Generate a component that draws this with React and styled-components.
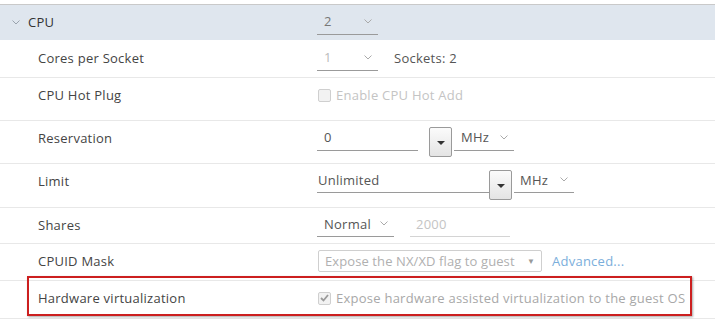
import React from "react";
import styled, { createGlobalStyle } from "styled-components";

const GlobalStyle = createGlobalStyle`
  html, body {
    margin: 0;
    padding: 0;
    background: #fff;
  }
  body {
    font-family: "Open Sans", "Noto Sans", sans-serif;
    font-size: 13px;
    letter-spacing: 0.25px;
    color: #444;
  }
`;

const Panel = styled.div`
  width: 715px;
  padding-top: 4px;
`;

const Row = styled.div`
  box-sizing: border-box;
  display: grid;
  grid-template-columns: 317px 1fr;
  align-items: center;
  height: ${(p) => p.h}px;
  padding-bottom: ${(p) => p.pb || 0}px;
  border-bottom: 1px solid #e8e8e8;
  position: relative;
`;

const HeaderRow = styled(Row)`
  background: #dfe6ee;
  border-top: 1px solid #c9c9c9;
  border-bottom: none;
`;

const HeaderLabel = styled.div`
  display: flex;
  align-items: center;
  padding-left: 12px;
  gap: 8px;
  color: #333;
`;

const Label = styled.div`
  padding-left: 38px;
  color: #444;
  white-space: nowrap;
`;

const Value = styled.div`
  display: flex;
  align-items: center;
  white-space: nowrap;
`;

const Select = styled.div`
  box-sizing: border-box;
  display: flex;
  align-items: center;
  justify-content: space-between;
  width: ${(p) => p.w}px;
  height: 25px;
  padding: 0 6px 1px ${(p) => (p.pl != null ? p.pl : 7)}px;
  border-bottom: 1px solid #9a9a9a;
  color: ${(p) => (p.disabled ? "#bbb" : "#777")};
`;

const Input = styled.div`
  box-sizing: border-box;
  display: flex;
  align-items: center;
  width: ${(p) => p.w}px;
  height: 25px;
  padding: 0 0 1px ${(p) => p.pl || 0}px;
  margin-left: ${(p) => p.ml || 0}px;
  border-bottom: 1px solid ${(p) => (p.disabled ? "#d4d4d4" : "#9a9a9a")};
  color: ${(p) => (p.disabled ? "#c4c4c4" : "#555")};
`;

const DropButton = styled.div`
  box-sizing: border-box;
  width: 23px;
  height: 30px;
  margin: 4px 2px -4px ${(p) => p.ml || 0}px;
  border: 1px solid #9a9a9a;
  border-radius: 2px;
  background: linear-gradient(#fbfbfb, #e4e4e4);
  display: flex;
  align-items: center;
  justify-content: center;
  &::after {
    content: "";
    margin-top: 2px;
    border-left: 4px solid transparent;
    border-right: 4px solid transparent;
    border-top: 4px solid #333;
  }
`;

const Plain = styled.span`
  color: #555;
  margin-left: ${(p) => p.ml || 0}px;
`;

const Checkbox = styled.span`
  box-sizing: border-box;
  width: 13px;
  height: 13px;
  margin-left: 1px;
  margin-right: 5px;
  border: 1px solid #cfcfcf;
  border-radius: 2px;
  background: #f2f2f2;
  display: inline-flex;
  align-items: center;
  justify-content: center;
`;

const Muted = styled.span`
  color: ${(p) => p.c || "#c4c4c4"};
`;

const BoxSelect = styled.div`
  box-sizing: border-box;
  width: 224px;
  height: 22px;
  margin-left: 1px;
  padding: 0 6px 0 6px;
  border: 1px solid #cfcfcf;
  border-radius: 2px;
  display: flex;
  align-items: center;
  justify-content: space-between;
  color: #b0b0b0;
  font-size: 13px;
  letter-spacing: 0.1px;
`;

const Caret = styled.span`
  font-size: 8px;
  color: #999;
`;

const Link = styled.span`
  color: #7aaedb;
  margin-left: 10px;
`;

const Highlight = styled.div`
  position: absolute;
  left: 27px;
  top: -5px;
  width: 665px;
  height: 40px;
  box-sizing: border-box;
  border: 2px solid #cc1f1f;
  box-shadow: 1px 1px 2px rgba(0, 0, 0, 0.35);
  pointer-events: none;
`;

const Chevron = ({ color = "#aaa" }) => (
  <svg width="8" height="5" viewBox="0 0 8 5">
    <path d="M0.5 0.5 L4 4 L7.5 0.5" fill="none" stroke={color} strokeWidth="1" />
  </svg>
);

const Check = () => (
  <svg width="9" height="8" viewBox="0 0 9 8">
    <path d="M1 4 L3.5 6.5 L8 1" fill="none" stroke="#9a9a9a" strokeWidth="1.8" />
  </svg>
);

export default function App() {
  return (
    <Panel>
      <GlobalStyle />
      <HeaderRow h={36} pb={1}>
        <HeaderLabel>
          <Chevron color="#9aa3ad" />
          <span>CPU</span>
        </HeaderLabel>
        <Value>
          <Select w={61}>
            <span>2</span>
            <Chevron />
          </Select>
        </Value>
      </HeaderRow>

      <Row h={38} pb={1}>
        <Label>Cores per Socket</Label>
        <Value>
          <Select w={61} disabled>
            <span>1</span>
            <Chevron />
          </Select>
          <Plain ml={16}>Sockets: 2</Plain>
        </Value>
      </Row>

      <Row h={43} pb={8}>
        <Label>CPU Hot Plug</Label>
        <Value>
          <Checkbox />
          <Muted>Enable CPU Hot Add</Muted>
        </Value>
      </Row>

      <Row h={43} pb={8}>
        <Label>Reservation</Label>
        <Value>
          <Input w={101} pl={7}>0</Input>
          <DropButton ml={11} />
          <Select w={60} pl={7}>
            <Plain>MHz</Plain>
            <Chevron />
          </Select>
        </Value>
      </Row>

      <Row h={44} pb={10}>
        <Label>Limit</Label>
        <Value>
          <Input w={172} pl={1}>Unlimited</Input>
          <DropButton />
          <Select w={60} pl={6}>
            <Plain>MHz</Plain>
            <Chevron />
          </Select>
        </Value>
      </Row>

      <Row h={36} pb={2}>
        <Label>Shares</Label>
        <Value>
          <Select w={77}>
            <Plain>Normal</Plain>
            <Chevron />
          </Select>
          <Input w={100} pl={6} ml={16} disabled>
            2000
          </Input>
        </Value>
      </Row>

      <Row h={37} pb={3}>
        <Label>CPUID Mask</Label>
        <Value>
          <BoxSelect>
            <span>Expose the NX/XD flag to guest</span>
            <Caret>▼</Caret>
          </BoxSelect>
          <Link>Advanced...</Link>
        </Value>
      </Row>

      <Row h={38} pb={3}>
        <Label>Hardware virtualization</Label>
        <Value>
          <Checkbox>
            <Check />
          </Checkbox>
          <Muted c="#a8a8a8">Expose hardware assisted virtualization to the guest OS</Muted>
        </Value>
        <Highlight />
      </Row>
    </Panel>
  );
}
